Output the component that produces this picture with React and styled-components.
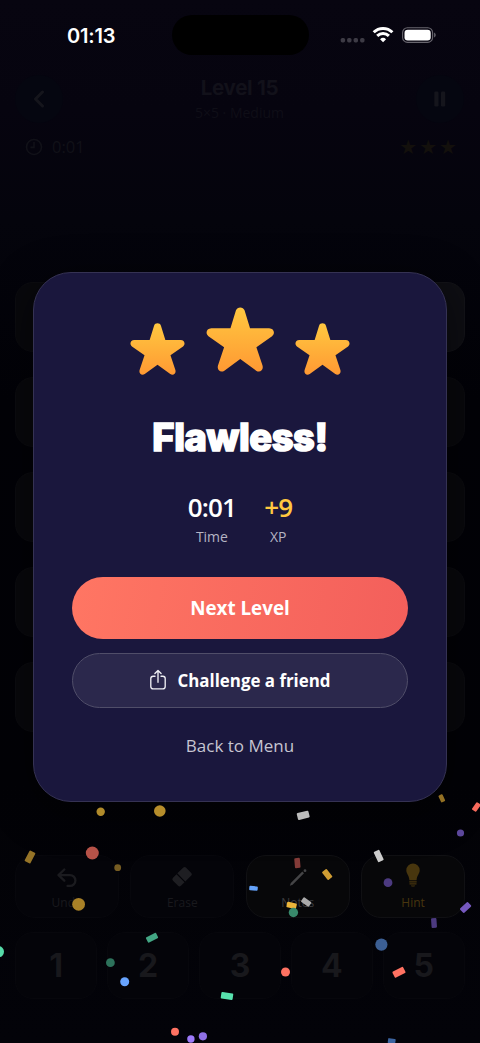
import React from 'react'
import styled, { createGlobalStyle } from 'styled-components'

const confetti = [
  { x: 100.7, y: 811.7, r: 4.2, fill: '#b18b2b' },
  { x: 159.8, y: 811, r: 5.8, fill: '#b68d2b' },
  { x: 92.3, y: 853, r: 6.5, fill: '#b65248' },
  { x: 117.7, y: 867.7, r: 3.4, fill: '#765c22' },
  { x: 30, y: 857, w: 6.5, h: 12, turn: 28, fill: '#967427' },
  { x: 78.6, y: 904.3, r: 6.4, fill: '#a98127' },
  { x: 303.2, y: 815.3, w: 12, h: 7, turn: -14, fill: '#bcbcbc' },
  { x: 441.8, y: 798.3, w: 4.5, h: 7.6, turn: -25, fill: '#937024' },
  { x: 476.3, y: 807, w: 5.2, h: 9, turn: 35, fill: '#f76a5c' },
  { x: 460.5, y: 833, r: 3.6, fill: '#5c479b' },
  { x: 378.7, y: 856, w: 6.2, h: 11.5, turn: -25, fill: '#cccccc' },
  { x: 297.4, y: 863, w: 5.6, h: 10, turn: -5, fill: '#833b38' },
  { x: 327.2, y: 874.5, w: 6, h: 10.2, turn: -38, fill: '#d09d33' },
  { x: 388, y: 882.7, r: 4.4, fill: '#4c3a80' },
  { x: 253.5, y: 888.3, w: 8.5, h: 4.4, turn: 5, fill: '#64a2fa' },
  { x: 306.2, y: 902, w: 9.6, h: 5.6, turn: 35, fill: '#aaaaaa' },
  { x: 291.6, y: 905.4, w: 9.8, h: 5.6, turn: 12, fill: '#ebb53a' },
  { x: 293.4, y: 912.5, r: 4.7, fill: '#38896b' },
  { x: 465.6, y: 907.5, w: 6, h: 10.8, turn: 48, fill: '#7659bf' },
  { x: 434, y: 923, w: 5.4, h: 9.6, turn: -4, fill: '#4c3a80' },
  { x: 152, y: 937.7, w: 11.4, h: 6, turn: -27, fill: '#43a684' },
  { x: -1.6, y: 951.7, r: 5.6, fill: '#56dba8' },
  { x: 110.4, y: 962.7, r: 4.4, fill: '#2d725b' },
  { x: 124.7, y: 981.7, r: 4.5, fill: '#68a4ff' },
  { x: 227, y: 996, w: 12, h: 6.6, turn: 8, fill: '#58e2ae' },
  { x: 175, y: 1031.7, r: 4, fill: '#ff7262' },
  { x: 190.9, y: 1039, r: 3.7, fill: '#9d7afa' },
  { x: 202.9, y: 1036.3, r: 4.1, fill: '#8f70e6' },
  { x: 285.5, y: 972, r: 4.5, fill: '#ff7262' },
  { x: 381.4, y: 944.6, r: 6.1, fill: '#3c5f94' },
  { x: 399, y: 972.3, w: 12, h: 6.8, turn: -27, fill: '#ff7262' },
  { x: 391.7, y: 1041, w: 7.6, h: 5, turn: 8, fill: '#3c64a0' },
]

const starPath =
  'M-3.5 2.7C-2.5-.5 2.5-.5 3.5 2.7L8 17.3H23.6C27.6 17.3 28.8 21.8 26 23.8L13.2 32.8L18.2 47.8C19.3 51.5 16 54 13 52L0 42.5L-13 52C-16 54-19.3 51.5-18.2 47.8L-13.2 32.8L-26 23.8C-28.8 21.8-27.6 17.3-23.6 17.3H-8Z'

const Star = ({ width }) => (
  <svg width={width} height={width * 0.965} viewBox="-28 0 56 54">
    <defs>
      <linearGradient id="gold" x1="0" y1="0" x2="0" y2="1">
        <stop offset="0" stopColor="#ffc840" />
        <stop offset="1" stopColor="#ff9933" />
      </linearGradient>
    </defs>
    <path d={starPath} fill="url(#gold)" />
  </svg>
)

const StatusIcons = () => (
  <svg width="96" height="18" viewBox="0 0 96 18">
    <g fill="#3d3b45">
      <rect x="0.7" y="12" width="4.4" height="4.4" rx="1.6" />
      <rect x="7.1" y="12" width="4.4" height="4.4" rx="1.6" />
      <rect x="13.6" y="12" width="4.4" height="4.4" rx="1.6" />
      <rect x="20.1" y="12" width="4.4" height="4.4" rx="1.6" />
    </g>
    <g fill="none" stroke="#fff" strokeWidth="3">
      <path d="M33.7 6.2a13.4 13.4 0 0 1 18.7 0" />
      <path d="M37.2 9.9a8.4 8.4 0 0 1 11.7 0" />
    </g>
    <path d="M43.05 16.3l-3-3.1a4.3 4.3 0 0 1 6 0z" fill="#fff" />
    <rect x="62.6" y="1.8" width="30" height="14.6" rx="4.9" fill="none" stroke="#68666e" strokeWidth="1.1" />
    <rect x="64.5" y="3.7" width="26.2" height="10.8" rx="3.2" fill="#fff" />
    <path d="M94.1 6.6c2.1.8 2.1 4.2 0 5z" fill="#68666e" />
  </svg>
)

const ShareIcon = () => (
  <svg width="18" height="22" viewBox="0 0 18 22" fill="none" stroke="#efeff4" strokeWidth="1.35" strokeLinecap="round" strokeLinejoin="round">
    <path d="M6 7.2H4.2a2.4 2.4 0 0 0-2.4 2.4v7.9a2.4 2.4 0 0 0 2.4 2.4h9.6a2.4 2.4 0 0 0 2.4-2.4V9.6a2.4 2.4 0 0 0-2.4-2.4H12" />
    <path d="M9 13.2V1.7M5.9 4.6 9 1.5l3.1 3.1" />
  </svg>
)

const UndoIcon = () => (
  <svg width="20" height="20" viewBox="0 0 20 20" fill="none" stroke="#1b1b1f" strokeWidth="2.3" strokeLinecap="round" strokeLinejoin="round">
    <path d="M7.3 1.5 1.5 7.1l5.8 5.6M2 7.1h11a5.4 5.4 0 0 1 0 10.8h-2.5" />
  </svg>
)

const EraserIcon = () => (
  <svg width="22" height="22" viewBox="0 0 22 22" fill="#1e1e22">
    <path d="M6.3 7.3 12.4 1.5a1.8 1.8 0 0 1 2.5 0l5.4 5.4a1.8 1.8 0 0 1 0 2.5l-6 6.1z" />
    <path d="m5.5 8.2 8 8.1-3.6 3.5a2 2 0 0 1-2.8 0L2 14.7a2 2 0 0 1 0-2.9z" />
  </svg>
)

const PencilIcon = () => (
  <svg width="20" height="20" viewBox="0 0 20 20" fill="#444446">
    <path d="M14.3 3.6 16 5.3 4.6 16.7l-2.8 1 1-2.8z" />
    <circle cx="17" cy="2.7" r="1.4" />
  </svg>
)

const BulbIcon = () => (
  <svg width="16" height="25" viewBox="0 0 16 25" fill="#48360e">
    <path d="M8 .5a6.7 6.7 0 0 1 6.7 6.7c0 3.5-2.8 4.9-3.1 10H4.4c-.3-5.1-3.1-6.5-3.1-10A6.7 6.7 0 0 1 8 .5z" />
    <path d="M4.3 18.2h7.4v1.3H4.3zM4.5 20.3h7v1.3h-7zM5.8 22.4h4.4c-.6 1.6-3.8 1.6-4.4 0z" />
  </svg>
)

const App = () => {
  return (
    <Screen>
      <GlobalStyle />
      <StatusBar>
        <Clock>01:13</Clock>
        <Island />
        <StatusIcons />
      </StatusBar>
      <Header>
        <RoundButton>
          <svg width="12" height="18" viewBox="0 0 12 18" fill="none" stroke="#15151c" strokeWidth="3" strokeLinecap="round" strokeLinejoin="round">
            <path d="M9.5 2 2.5 9l7 7" />
          </svg>
        </RoundButton>
        <Heading>
          <LevelName>Level 15</LevelName>
          <LevelInfo>5×5 · Medium</LevelInfo>
        </Heading>
        <RoundButton>
          <svg width="12" height="16" viewBox="0 0 12 16" fill="#15151c">
            <rect x="0.3" y="0.5" width="4.2" height="15" rx="1.2" />
            <rect x="7" y="0.5" width="4.2" height="15" rx="1.2" />
          </svg>
        </RoundButton>
      </Header>
      <Progress>
        <Timer>
          <svg width="18" height="18" viewBox="0 0 18 18" fill="none" stroke="#111118" strokeWidth="1.6">
            <circle cx="9" cy="9" r="7.5" />
            <path d="M9 4v5.4H5.4" />
          </svg>
          0:01
        </Timer>
        <Rating>★★★</Rating>
      </Progress>
      <Board>
        {Array.from({ length: 25 }, (_, i) => (
          <Cell key={i} $lit={i === 4} />
        ))}
      </Board>
      <Tools>
        <Tool>
          <UndoIcon />
          Undo
        </Tool>
        <Tool>
          <EraserIcon />
          Erase
        </Tool>
        <Tool $active color="#3b3b3e">
          <PencilIcon />
          Notes
        </Tool>
        <Tool $active color="#48360e">
          <BulbIcon />
          Hint
        </Tool>
      </Tools>
      <Keypad>
        {[1, 2, 3, 4, 5].map((n) => (
          <Key key={n}>{n}</Key>
        ))}
      </Keypad>

      <Overlay>
        <Modal>
          <Stars>
            <Star width={55} />
            <Star width={68.5} />
            <Star width={55} />
          </Stars>
          <Title>Flawless!</Title>
          <Stats>
            <Stat>
              <Value>0:01</Value>
              <Label>Time</Label>
            </Stat>
            <Stat>
              <Value color="#ffc840">+9</Value>
              <Label>XP</Label>
            </Stat>
          </Stats>
          <NextButton>Next Level</NextButton>
          <ShareButton>
            <ShareIcon />
            Challenge a friend
          </ShareButton>
          <MenuLink>Back to Menu</MenuLink>
        </Modal>
      </Overlay>

      <Confetti viewBox="0 0 480 1043">
        {confetti.map(({ x, y, r, w, h, turn, fill }) =>
          r ? (
            <circle key={`${x}-${y}`} cx={x} cy={y} r={r} fill={fill} />
          ) : (
            <rect
              key={`${x}-${y}`}
              x={x - w / 2}
              y={y - h / 2}
              width={w}
              height={h}
              rx="1"
              fill={fill}
              transform={`rotate(${turn} ${x} ${y})`}
            />
          )
        )}
      </Confetti>
    </Screen>
  )
}

const GlobalStyle = createGlobalStyle`
  * {
    box-sizing: border-box;
  }
  body {
    margin: 0;
    background: #030308;
  }
  button {
    font-family: inherit;
    border: 0;
    padding: 0;
    background: none;
  }
`

const Screen = styled.div`
  position: relative;
  width: 480px;
  height: 1043px;
  overflow: hidden;
  display: flex;
  flex-direction: column;
  background: linear-gradient(#070510 0, #06040f 110px, #04040c 220px, #020207 400px, #020206 780px, #030309 1043px);
  font-family: 'Open Sans', 'Noto Sans', sans-serif;
`

const StatusBar = styled.div`
  height: 70px;
  padding: 15px 44px 0 67px;
  display: grid;
  grid-template-columns: 104.5px 137px 1fr;
  justify-items: start;
  svg {
    justify-self: end;
    margin-top: 11px;
  }
`

const Clock = styled.div`
  font: 600 20px/43px 'Inter', sans-serif;
  letter-spacing: -0.2px;
  color: #fff;
`

const Island = styled.div`
  width: 137px;
  height: 40px;
  border-radius: 20px;
  background: #000;
`

const Header = styled.div`
  height: 58px;
  padding: 0 16px 0 15px;
  display: flex;
  align-items: center;
  justify-content: space-between;
`

const RoundButton = styled.button`
  width: 48px;
  height: 48px;
  border-radius: 50%;
  background: #050610;
  display: flex;
  align-items: center;
  justify-content: center;
`

const Heading = styled.div`
  text-align: center;
  color: #12111a;
`

const LevelName = styled.div`
  font: 700 20.5px/26px 'Inter', sans-serif;
  letter-spacing: -0.3px;
`

const LevelInfo = styled.div`
  font-size: 14px;
  line-height: 23px;
  color: #0f0e17;
`

const Progress = styled.div`
  height: 37px;
  padding: 0 23px 0 25px;
  display: flex;
  align-items: center;
  justify-content: space-between;
`

const Timer = styled.div`
  display: flex;
  align-items: center;
  gap: 9px;
  font-size: 16.5px;
  color: #111118;
`

const Rating = styled.div`
  font: 20px/20px 'DejaVu Sans', sans-serif;
  letter-spacing: 2px;
  margin-right: -2px;
  color: #13100c;
`

const Board = styled.div`
  margin-top: 117px;
  padding: 0 15px;
  display: grid;
  grid-template-columns: repeat(5, 70px);
  grid-auto-rows: 70px;
  justify-content: space-between;
  row-gap: 25px;
`

const Cell = styled.div`
  border-radius: 18px;
  border: 1px solid ${({ $lit }) => ($lit ? '#131318' : '#0c0c10')};
  background: ${({ $lit }) => ($lit ? '#0e0e13' : '#08080c')};
`

const Tools = styled.div`
  margin-top: 123px;
  padding: 0 15px;
  display: grid;
  grid-template-columns: repeat(4, 1fr);
  gap: 11.6px;
`

const Tool = styled.button`
  height: 63px;
  border-radius: 20px;
  border: 1px solid ${({ $active }) => ($active ? '#101013' : '#07070c')};
  background: ${({ $active }) => ($active ? '#070709' : '#040409')};
  color: ${({ color }) => color ?? '#19191d'};
  display: flex;
  flex-direction: column;
  align-items: center;
  justify-content: flex-end;
  gap: 6px;
  padding-bottom: 6px;
  font-size: 12px;
  font-weight: 500;
  line-height: 17px;
`

const Keypad = styled.div`
  margin-top: 14px;
  padding: 0 15px;
  display: grid;
  grid-template-columns: repeat(5, 1fr);
  gap: 9.5px;
`

const Key = styled.button`
  height: 67px;
  border-radius: 18px;
  border: 1px solid #07070c;
  background: #040409;
  color: #18181c;
  font: 650 32px/64px 'Inter', sans-serif;
`

const Overlay = styled.div`
  position: absolute;
  inset: 0;
  padding-top: 272px;
  display: flex;
  justify-content: center;
  align-items: flex-start;
`

const Modal = styled.div`
  width: 414px;
  height: 529.5px;
  padding: 34px 38px 0;
  border: 1px solid #353253;
  border-radius: 38px;
  background: #1a173d;
  box-shadow: 0 10px 40px rgba(0, 0, 0, 0.5);
  display: flex;
  flex-direction: column;
  align-items: center;
  color: #fff;
`

const Stars = styled.div`
  height: 69px;
  display: flex;
  align-items: flex-end;
  gap: 20.5px;
  svg:nth-child(2) {
    align-self: flex-start;
  }
`

const Title = styled.h1`
  margin: 34px 0 0;
  font: 800 38px/54px 'Inter', sans-serif;
  letter-spacing: -0.4px;
  -webkit-text-stroke: 1.6px #fff;
  stroke-linejoin: round;
`

const Stats = styled.div`
  margin-top: 26px;
  display: flex;
  gap: 28px;
`

const Stat = styled.div`
  display: flex;
  flex-direction: column;
  align-items: center;
`

const Value = styled.div`
  font-size: 26px;
  font-weight: 650;
  line-height: 35px;
  letter-spacing: -0.8px;
  color: ${({ color }) => color ?? '#fff'};
`

const Label = styled.div`
  font-size: 14px;
  line-height: 23px;
  color: #b5b4c4;
`

const NextButton = styled.button`
  width: 336px;
  height: 62px;
  margin-top: 29px;
  border-radius: 31px;
  background: linear-gradient(100deg, #ff7663, #f35f5b);
  color: #fff;
  font-size: 18.8px;
  font-weight: 700;
`

const ShareButton = styled.button`
  width: 336px;
  height: 55.5px;
  margin-top: 13.5px;
  border-radius: 28px;
  border: 1px solid #504e69;
  background: #2b284c;
  color: #fff;
  font-size: 16.9px;
  font-weight: 700;
  display: flex;
  align-items: center;
  justify-content: center;
  gap: 10px;
`

const MenuLink = styled.button`
  margin-top: 26px;
  font-size: 17px;
  line-height: 24px;
  color: #c6c5d1;
`

const Confetti = styled.svg`
  position: absolute;
  inset: 0;
  width: 480px;
  height: 1043px;
`

export default App
